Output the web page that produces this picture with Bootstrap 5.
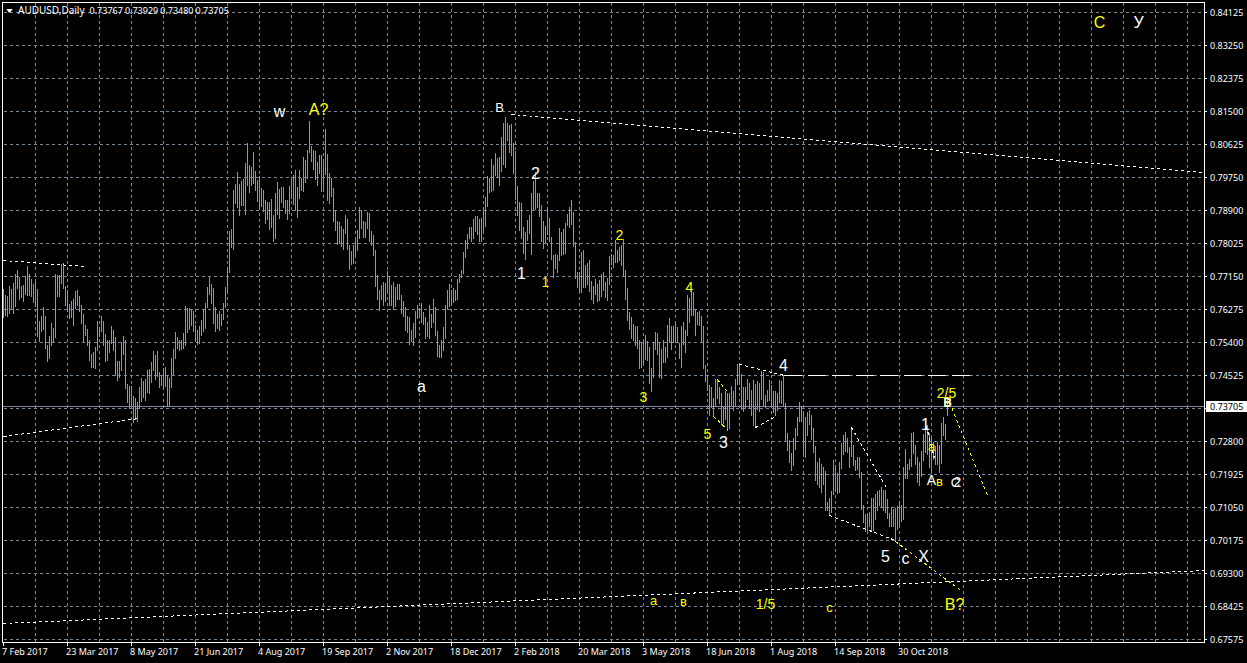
<!DOCTYPE html>
<html lang="en">
<head>
<meta charset="utf-8">
<meta name="viewport" content="width=device-width, initial-scale=1">
<title>AUDUSD, Daily</title>
<link rel="stylesheet" href="https://cdn.jsdelivr.net/npm/bootstrap@5.3.0/dist/css/bootstrap.min.css">
<style>
  :root { --grid: #778899; --bull: #00ff00; --mark: #ffff00; }
  body { background: #000; color: #fff; font-family: "Noto Sans", "Open Sans", sans-serif; font-size: 9px; line-height: 13px; }
  .terminal { padding: 2px 0 0 2px; }
  .plot { border: 1px solid #fff; min-width: 0; }
  .plot svg { shape-rendering: crispEdges; }
  .plot svg text { font-family: "Liberation Sans", Arial, sans-serif; text-anchor: middle; }
  .quote { left: 3px; top: 1px; gap: 5px; }
  .quote h1 { font-size: 10px; line-height: 13px; }
  .quote .caret { width: 7px; height: 4px; background: #fff; clip-path: polygon(0 0, 100% 0, 60% 100%, 40% 100%); }
  .quote .prices { gap: 2px; }
  .price-axis { width: 42px; padding-top: 4px; }
  .price-axis ol { margin-bottom: -3px; }
  .price-axis li { height: 13px; gap: 3px; }
  .price-axis li::before { content: ""; width: 2px; height: 1px; background: #fff; }
  .price-axis .current { left: 1px; right: 0; height: 11px; line-height: 11px; padding-left: 4px; background: #fff; color: #000; margin-top: -5px; }
  .time-axis { height: 20px; margin: 0 42px 0 1px; }
  .time-axis li { border-left: 1px solid #fff; height: 3px; }
  .time-axis span { margin: 2px 0 0 -2px; }
</style>
</head>
<body>
<main class="terminal vh-100 d-flex flex-column overflow-hidden">
  <div class="d-flex flex-grow-1">
    <section class="plot position-relative flex-grow-1">
      <svg id="chart" class="position-absolute top-0 start-0 w-100 h-100" role="img" aria-label="AUDUSD daily bars with wave labels"></svg>
      <div class="quote position-absolute d-flex align-items-center">
        <span class="caret"></span>
        <h1 class="m-0 fw-normal">AUDUSD,Daily</h1>
        <div class="prices d-flex"><span>0.73767</span><span>0.73929</span><span>0.73480</span><span>0.73705</span></div>
      </div>
    </section>
    <aside class="price-axis position-relative d-flex flex-column flex-shrink-0">
      <ol id="prices" class="list-unstyled d-flex flex-column justify-content-between flex-grow-1"></ol>
      <div id="current" class="current position-absolute">0.73705</div>
    </aside>
  </div>
  <ol id="dates" class="time-axis list-unstyled d-flex flex-shrink-0"></ol>
</main>
<script src="https://cdn.jsdelivr.net/npm/bootstrap@5.3.0/dist/js/bootstrap.bundle.min.js"></script>
<script>
  // Chart units: the plot spans W x H, with its origin at (3, 3).
  const W = 1201, H = 639, ORIGIN = 3;
  const px = x => ((x - ORIGIN + 0.5) / W * 100) + '%';
  const py = y => ((y - ORIGIN + 0.5) / H * 100) + '%';
  const chart = document.getElementById('chart');
  function add(name, attrs, text) {
    const el = document.createElementNS('http://www.w3.org/2000/svg', name);
    for (const k in attrs) el.setAttribute(k, attrs[k]);
    if (text) el.textContent = text;
    chart.appendChild(el);
  }
  function line(x1, y1, x2, y2, stroke, dash) {
    add('line', { x1: px(x1), y1: py(y1), x2: px(x2), y2: py(y2), stroke, 'stroke-dasharray': dash || 'none' });
  }

  // Grid
  for (let x = 35; x < 1204; x += 32) line(x, 2.5, x, 642, 'var(--grid)', '3 3');
  for (let y = 12; y < 642; y += 33) line(3.5, y, 1204, y, 'var(--grid)', '3 3');
  line(2, 406, 1205, 406, 'var(--grid)');

  // One high-low pair for each day, every two units
  const bars = `289 318,295 316,296 317,286 314,289 309,283 314,274 307,270 289,277 300,286 298,285 302,276 295,266 296,274 296,279 297,284 303,282 307,289 337,321 342,316 332,307 330,316 349,345 362,336 359,323 346,328 343,274 338,275 297,275 297,264 284,263 289,286 306,290 312,304 319,301 318,299 326,291 309,290 306,296 312,305 324,314 342,325 336,329 346,340 361,354 368,352 368,347 369,321 351,327 337,316 332,321 346,334 362,340 361,340 353,326 344,330 351,337 376,361 381,361 378,342 371,336 355,340 389,384 403,386 409,386 406,396 423,398 420,402 422,387 409,378 402,381 398,379 401,370 393,369 394,362 383,351 371,355 380,351 377,372 388,376 386,368 390,367 387,375 407,378 407,358 388,349 375,332 359,337 349,340 351,340 350,333 349,306 346,308 333,308 330,309 326,311 332,325 342,330 345,326 344,320 336,309 332,303 329,287 308,277 295,284 304,288 324,307 332,314 329,311 331,314 326,303 320,287 308,267 292,
231 273,229 248,190 250,184 204,172 208,184 216,181 206,179 206,163 215,143 186,165 193,167 186,152 184,171 191,180 202,176 210,188 207,190 212,200 224,202 220,202 230,199 228,215 242,193 239,182 215,189 219,187 203,187 208,200 214,200 220,186 214,177 199,175 205,170 211,187 218,170 199,178 191,157 192,160 183,150 179,121 153,146 162,150 170,151 180,162 186,155 174,155 192,160 190,129 175,154 201,173 204,178 197,188 222,210 231,221 245,222 244,226 247,229 250,215 234,219 250,245 270,251 265,245 264,240 256,230 251,207 239,210 229,221 238,222 238,212 229,213 242,231 246,235 256,250 287,275 300,290 311,
285 300,282 306,283 302,271 293,276 306,285 306,282 310,287 307,284 300,284 300,295 314,301 317,307 331,316 333,317 345,330 342,323 346,311 338,305 319,308 318,303 323,312 325,317 339,322 337,305 339,314 328,299 323,307 336,331 357,345 358,340 358,327 351,305 339,290 310,284 307,290 305,288 303,290 301,279 300,274 283,270 278,252 274,240 258,234 249,227 239,227 242,219 239,216 232,216 235,219 242,218 242,208 231,197 227,
176 207,178 193,159 192,165 191,153 176,158 178,157 186,137 172,123 165,117 168,123 141,125 153,124 156,143 174,151 200,186 216,202 231,203 239,227 254,232 260,220 241,215 234,193 255,181 210,172 210,193 208,193 217,205 242,221 249,226 243,207 235,218 242,237 260,255 278,254 269,255 273,228 261,232 256,229 255,223 254,214 226,207 228,200 225,212 247,242 279,272 288,272 292,252 293,250 288,265 288,263 285,260 292,281 300,286 304,279 295,284 302,280 301,274 297,272 291,282 298,278 301,256 285,254 265,255 268,240 263,250 263,247 261,245 266,239 276,270 300,
288 321,312 330,317 339,324 341,326 346,326 349,340 369,343 368,340 364,335 360,341 361,347 384,368 392,342 378,332 350,333 355,342 378,349 379,340 363,347 363,325 358,318 343,326 350,326 343,323 343,327 343,343 359,326 368,322 345,330 353,295 336,298 323,291 316,292 316,309 336,312 325,311 326,316 343,326 369,365 382,375 391,385 416,387 408,398 416,379 407,379 399,387 404,393 425,406 424,391 420,393 431,393 429,386 406,391 411,379 406,364 385,364 385,374 410,387 412,387 409,379 400,383 408,390 416,380 426,384 427,381 410,383 412,371 400,372 407,
395 408,390 402,380 401,385 407,391 413,391 416,393 411,380 403,381 404,375 406,403 441,433 451,440 463,453 471,438 466,428 450,417 436,402 422,406 422,412 457,417 458,412 436,410 425,415 440,428 453,446 481,462 485,458 488,464 493,467 485,471 511,502 511,498 515,491 513,460 495,465 491,473 494,462 493,443 469,435 455,432 452,438 453,447 468,428 457,445 466,460 471,457 470,457 478,472 510,505 523,514 532,513 532,512 527,498 531,498 531,494 520,491 511,490 506,487 508,490 511,490 513,499 519,513 527,507 527,509 527,508 541,506 530,501 527,505 522,467 520,449 479,464 479,459 470,433 467,432 454,445 465,457 483,462 486,451 477,434 461,423 453,425 455,433 468,437 472,442 460,446 465,442 465,445 473,423 464,417 436,424 440,399 416`;
  bars.split(',').forEach((bar, i) => {
    const [high, low] = bar.trim().split(' ').map(Number);
    line(3 + 2 * i, high - 0.5, 3 + 2 * i, low - 0.5, 'var(--bull)');
  });

  // Trend lines
  const white = '#fff', yellow = 'var(--mark)';
  [
    [3, 260, 84, 266, white], [3, 436, 138, 418, white],
    [511, 114, 1204, 172, white], [3, 623, 1204, 570, white],
    [739, 364, 784, 375, white], [755, 427, 775, 416, white],
    [717, 379, 728, 393, yellow], [713, 416, 728, 430, yellow],
    [851, 427, 887, 489, white], [829, 515, 895, 540, white],
    [895, 541, 963, 592, yellow], [947, 397, 987, 495, yellow],
    [926, 426, 934, 458, white]
  ].forEach(l => line(...l, '3 3'));
  line(783, 375, 969, 375, white, '18 6');

  // Wave labels: text, centre, baseline, size, colour
  [
    ['C', 1099, 28, 16, yellow], ['У', 1138, 28, 16, white],
    ['w', 279, 117, 16, white], ['A?', 318, 115, 16, yellow],
    ['B', 499, 112, 13, white], ['2', 535, 179, 16, white],
    ['1', 521, 279, 16, white], ['1', 545, 287, 14, yellow],
    ['2', 619, 240, 14, yellow], ['a', 421, 392, 16, white],
    ['3', 643, 402, 14, yellow], ['4', 689, 292, 14, yellow],
    ['5', 707, 439, 14, yellow], ['3', 723, 448, 16, white],
    ['4', 783, 371, 16, white], ['2/5', 946, 398, 14, yellow],
    ['B', 947, 406, 13, yellow], ['в', 947, 407, 16, white],
    ['1', 925, 430, 16, white], ['a', 931, 451, 13, yellow],
    ['A', 931, 485, 14, white], ['в', 939, 486, 13, yellow],
    ['C', 955, 487, 13, white], ['2', 957, 487, 14, white],
    ['5', 885, 562, 16, white], ['c', 905, 564, 16, white],
    ['X', 923, 562, 16, white], ['B?', 954, 610, 16, yellow],
    ['1/5', 765, 609, 14, yellow], ['a', 653, 605, 13, yellow],
    ['в', 683, 606, 13, yellow], ['c', 829, 612, 13, yellow]
  ].forEach(([t, x, y, size, fill]) => add('text', { x: px(x), y: py(y - 0.5), 'font-size': size, fill }, t));

  // Axes
  const prices = ['0.84125', '0.83250', '0.82375', '0.81500', '0.80625', '0.79750', '0.78900', '0.78025', '0.77150', '0.76275',
    '0.75400', '0.74525', '', '0.72800', '0.71925', '0.71050', '0.70175', '0.69300', '0.68425', '0.67575'];
  document.getElementById('prices').innerHTML = prices.map(p => `<li class="d-flex align-items-center">${p}</li>`).join('');
  document.getElementById('current').style.top = ((406 - 2) / 641 * 100) + '%';
  const dates = ['7 Feb 2017', '23 Mar 2017', '8 May 2017', '21 Jun 2017', '4 Aug 2017', '19 Sep 2017', '2 Nov 2017', '18 Dec 2017',
    '2 Feb 2018', '20 Mar 2018', '3 May 2018', '18 Jun 2018', '1 Aug 2018', '14 Sep 2018', '30 Oct 2018'];
  document.getElementById('dates').innerHTML = dates.map(d =>
    `<li class="flex-shrink-0 text-nowrap" style="width:${64 / 1202 * 100}%"><span class="d-block">${d}</span></li>`).join('');
</script>
</body>
</html>
